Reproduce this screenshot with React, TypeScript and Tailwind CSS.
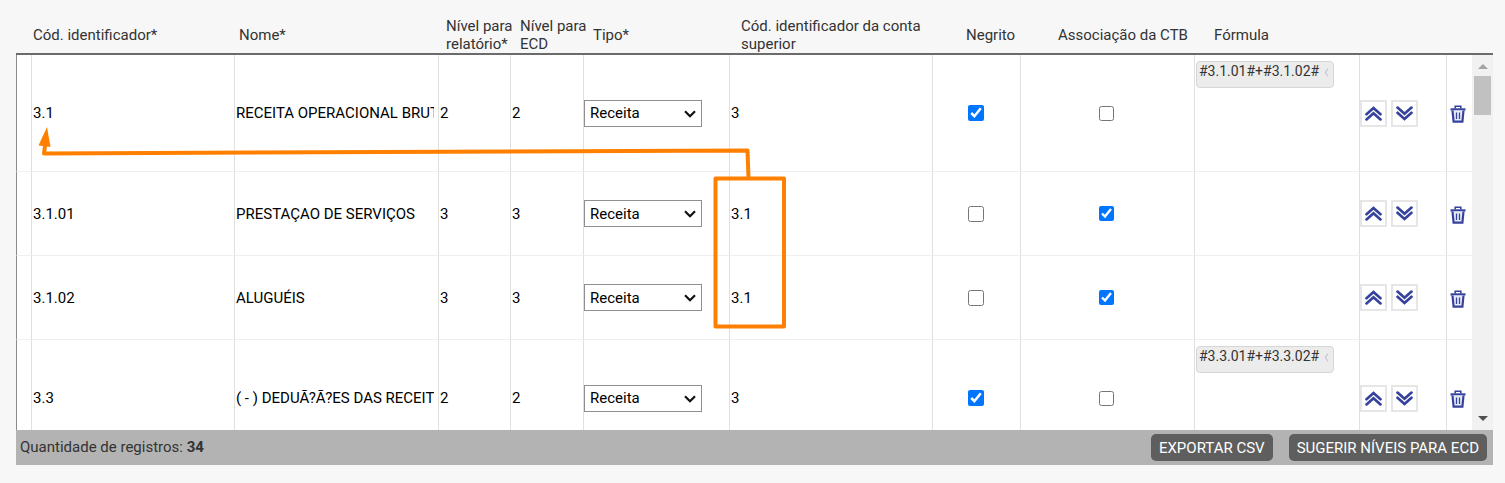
import { useState } from 'react';

type Conta = {
  codigo: string;
  nome: string;
  nivelRelatorio: string;
  nivelEcd: string;
  superior: string;
  negrito: boolean;
  ctb: boolean;
  formula?: string;
};

const contas: Conta[] = [
  { codigo: '3.1', nome: 'RECEITA OPERACIONAL BRUTA', nivelRelatorio: '2', nivelEcd: '2', superior: '3', negrito: true, ctb: false, formula: '#3.1.01#+#3.1.02#' },
  { codigo: '3.1.01', nome: 'PRESTAÇAO DE SERVIÇOS', nivelRelatorio: '3', nivelEcd: '3', superior: '3.1', negrito: false, ctb: true },
  { codigo: '3.1.02', nome: 'ALUGUÉIS', nivelRelatorio: '3', nivelEcd: '3', superior: '3.1', negrito: false, ctb: true },
  { codigo: '3.3', nome: '( - ) DEDUÃ?Ã?ES DAS RECEITAS', nivelRelatorio: '2', nivelEcd: '2', superior: '3', negrito: true, ctb: false, formula: '#3.3.01#+#3.3.02#' },
];

const tdClass = 'border-l border-b border-l-[#e0e0e0] border-b-[#efefef] p-0';

const Campo = ({ label, value }: { label: string; value: string }) => (
  <td className={`${tdClass} pl-px pr-1`}>
    <input type="text" aria-label={label} defaultValue={value} className="block w-full bg-transparent text-black outline-none" />
  </td>
);

const SetaDupla = ({ baixo }: { baixo?: boolean }) => (
  <svg width="17" height="15" viewBox="0 0 17 15" fill="none" stroke="#36439c" strokeWidth="2.7" strokeLinecap="round" className={baixo ? 'rotate-180' : ''}>
    <path d="M1.5 8.2 L8.5 2 L15.5 8.2" />
    <path d="M1.5 13.4 L8.5 7.2 L15.5 13.4" />
  </svg>
);

const Lixeira = () => (
  <svg width="16" height="18" viewBox="0 0 16 18" fill="none" stroke="#36439c">
    <path d="M5.2 3.5 V1.2 H10.8 V3.5" strokeWidth="1.6" />
    <path d="M0.5 4.4 H15.5" strokeWidth="2.2" />
    <path d="M2.5 5.5 L3.6 16.7 H12.4 L13.5 5.5" strokeWidth="2.2" fill="#e9ebf6" />
    <path d="M6.5 7.5 V14 M9.5 7.5 V14" strokeWidth="1.3" />
  </svg>
);

function Linha({ conta }: { conta: Conta }) {
  const [negrito, setNegrito] = useState(conta.negrito);
  const [ctb, setCtb] = useState(conta.ctb);

  return (
    <tr className={conta.formula ? 'h-[117px]' : 'h-[84px]'}>
      <td className="border-l border-b border-l-[#8c8c8c] border-b-[#efefef] p-0"></td>
      <Campo label="Cód. identificador" value={conta.codigo} />
      <Campo label="Nome" value={conta.nome} />
      <Campo label="Nível para relatório" value={conta.nivelRelatorio} />
      <Campo label="Nível para ECD" value={conta.nivelEcd} />
      <td className={tdClass}>
        <div className="relative w-[118px]">
          <select aria-label="Tipo" defaultValue="Receita" className="block h-[27px] w-full appearance-none border border-[#8f8f8f] bg-white px-[5px] text-black">
            <option>Receita</option>
            <option>Despesa</option>
          </select>
          <svg width="12" height="8" viewBox="0 0 12 8" fill="none" stroke="#111" strokeWidth="2.2" className="pointer-events-none absolute right-1.5 top-2.5">
            <path d="M1 1.2 L6 6.2 L11 1.2" />
          </svg>
        </div>
      </td>
      <Campo label="Cód. identificador da conta superior" value={conta.superior} />
      <td className={`${tdClass} pr-0.5`}>
        <input type="checkbox" aria-label="Negrito" checked={negrito} onChange={(e) => setNegrito(e.target.checked)} className="mx-auto block size-4" />
      </td>
      <td className={`${tdClass} pr-0.5`}>
        <input type="checkbox" aria-label="Associação da CTB" checked={ctb} onChange={(e) => setCtb(e.target.checked)} className="mx-auto block size-[15px]" />
      </td>
      <td className={`${tdClass} align-top`}>
        {conta.formula && (
          <div className="ml-px mt-1.5 flex h-[27px] w-[138px] justify-between rounded border border-[#d6d6d6] bg-[#ececec] pl-0.5 pr-1 text-sm leading-[18px] text-[#333]">
            <span>{conta.formula}</span>
            <svg width="5" height="9" viewBox="0 0 5 9" fill="none" stroke="#c9c9d6" strokeWidth="1.4" className="mt-1.5">
              <path d="M4 0.5 L1.5 4.5 L4 8.5" />
            </svg>
          </div>
        )}
      </td>
      <td className={tdClass}>
        <div className="flex gap-1">
          <button type="button" aria-label="Mover para cima" className="flex size-[27px] items-center justify-center border-2 border-[#e6e6e6] bg-white"><SetaDupla /></button>
          <button type="button" aria-label="Mover para baixo" className="flex size-[27px] items-center justify-center border-2 border-[#e6e6e6] bg-white"><SetaDupla baixo /></button>
        </div>
      </td>
      <td className={tdClass}>
        <button type="button" aria-label="Excluir" className="ml-[3px] block pt-0.5"><Lixeira /></button>
      </td>
    </tr>
  );
}

export default function App() {
  return (
    <div className="relative flex h-screen flex-col bg-[#f7f7f7] pb-[18px] pl-4 pr-3 pt-4 font-[Roboto,sans-serif] text-[15px] leading-[18px] text-[#333]">
      {/* Tabela */}
      <div className="flex min-h-0 flex-1">
        <div className="min-w-0 flex-1 overflow-hidden">
          <table className="w-full table-fixed border-separate border-spacing-0 bg-white">
            <colgroup>
              <col className="w-[15px]" />
              <col className="w-[203px]" />
              <col className="w-[204px]" />
              <col className="w-[72px]" />
              <col className="w-[73px]" />
              <col className="w-[146px]" />
              <col className="w-[203px]" />
              <col className="w-[88px]" />
              <col className="w-[174px]" />
              <col className="w-[165px]" />
              <col className="w-[87px]" />
              <col className="w-[26px]" />
            </colgroup>
            <thead>
              <tr className="h-[39px] whitespace-nowrap bg-[#f7f7f7] text-left *:border-b-2 *:border-[#6b6b6b] *:p-0 *:font-normal">
                <td></td>
                <th><div className="pl-0.5">Cód. identificador*</div></th>
                <th><div className="pl-[5px]">Nome*</div></th>
                <th><div className="pl-2">Nível para<br />relatório*</div></th>
                <th><div className="pl-2.5">Nível para<br />ECD</div></th>
                <th><div className="pl-2.5">Tipo*</div></th>
                <th><div className="pl-3">Cód. identificador da conta<br />superior</div></th>
                <th><div className="pl-[34px]">Negrito</div></th>
                <th><div className="pl-[38px]">Associação da CTB</div></th>
                <th><div className="pl-5">Fórmula</div></th>
                <td></td>
                <td></td>
              </tr>
            </thead>
            <tbody>
              {contas.map((conta) => <Linha key={conta.codigo} conta={conta} />)}
            </tbody>
          </table>
        </div>

        {/* Barra de rolagem */}
        <div className="flex w-[21px] flex-col">
          <div className="h-[39px] border-b-2 border-[#6b6b6b]"></div>
          <div className="flex flex-1 flex-col items-center bg-[#f1f1f1]">
            <svg width="10" height="21" viewBox="0 0 10 21" fill="#a3a3a3"><path d="M0 14 L5 9 L10 14 Z" /></svg>
            <div className="h-[39px] w-[17px] bg-[#c1c1c1]"></div>
            <svg width="10" height="21" viewBox="0 0 10 21" fill="#505050" className="mt-auto"><path d="M0 7 L5 12 L10 7 Z" /></svg>
          </div>
        </div>
      </div>

      {/* Rodapé */}
      <div className="flex justify-between bg-[#b3b3b3] px-1 py-1">
        <p className="pt-1">Quantidade de registros: <b className="font-bold">34</b></p>
        <div className="flex gap-4 pr-0.5">
          <button type="button" className="h-[27px] rounded-[5px] bg-[#5e5e5e] px-2 text-white">EXPORTAR CSV</button>
          <button type="button" className="h-[27px] rounded-[5px] bg-[#5e5e5e] px-2 text-white">SUGERIR NÍVEIS PARA ECD</button>
        </div>
      </div>

      {/* Seta que liga a conta superior ao código */}
      <svg width="770" height="220" viewBox="30 120 770 220" fill="none" stroke="#ff8000" strokeWidth="4" strokeLinejoin="round" strokeLinecap="round" className="pointer-events-none absolute left-[30px] top-[120px]">
        <rect x="715.5" y="178.5" width="68.5" height="148" />
        <path d="M748.5 178 L747.5 150.5 L44 153.5 L45 146" />
        <path d="M47 127 L38.5 145.5 L50.5 147 Z" fill="#ff8000" stroke="none" />
      </svg>
    </div>
  );
}
